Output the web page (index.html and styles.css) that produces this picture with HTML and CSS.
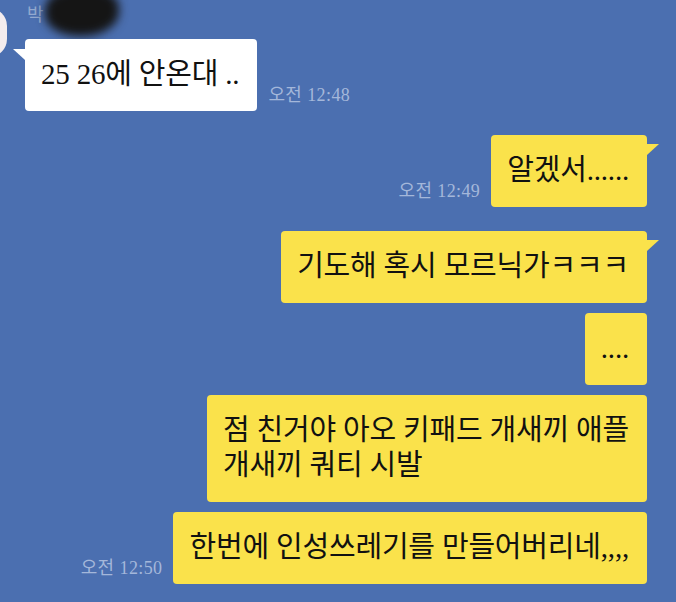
FILE: index.html
```html
<!DOCTYPE html>
<html lang="ko">
<head>
    <meta charset="UTF-8">
    <meta name="viewport" content="width=device-width, initial-scale=1.0">
    <title>채팅</title>
    <link rel="stylesheet" href="styles.css">
</head>
<body>

<div class="chat">
    <div class="row-in">
        <div class="avatar"></div>
        <div class="in-body">
            <div class="name">박<span class="censor"></span></div>
            <div class="line">
                <div class="bubble white tail">25 26에 안온대 ..</div>
                <span class="time">오전 12:48</span>
            </div>
        </div>
    </div>

    <div class="line out group">
        <span class="time">오전 12:49</span>
        <div class="bubble yellow tail">알겠서......</div>
    </div>

    <div class="line out group">
        <div class="bubble yellow tail">기도해 혹시 모르닉가ㅋㅋㅋ</div>
    </div>
    <div class="line out">
        <div class="bubble yellow">....</div>
    </div>
    <div class="line out">
        <div class="bubble yellow">점 친거야 아오 키패드 개새끼 애플<br>개새끼 쿼티 시발</div>
    </div>
    <div class="line out">
        <span class="time">오전 12:50</span>
        <div class="bubble yellow">한번에 인성쓰레기를 만들어버리네,,,,</div>
    </div>
</div>

</body>
</html>
```

FILE: styles.css
```css
body { margin: 0; background: #4b6fb0; font-family: "Liberation Serif", "Noto Sans CJK KR", serif; color: #111; overflow: hidden; }
.chat { width: 676px; height: 602px; padding-right: 29px; box-sizing: border-box; }

/* 받은 메시지 */
.row-in { display: flex; }
.avatar { width: 45px; height: 49px; margin-left: -38px; margin-top: 8px; border-radius: 18px; background: #f3ecee; flex-shrink: 0; }
.in-body { margin-left: 18px; }
.name { position: relative; height: 26px; margin-bottom: 13px; padding-left: 2px; font-family: "Noto Sans CJK KR", sans-serif; font-size: 18px; line-height: 26px; color: #93a9cf; }
.censor { position: absolute; left: 20px; top: -12px; width: 74px; height: 48px; border-radius: 45% 40% 50% 45%; background: #151515; filter: blur(5px); }

.line { display: flex; align-items: flex-end; gap: 11px; }
.out { justify-content: flex-end; margin-top: 10px; }
.out.group { margin-top: 24px; }

.bubble { position: relative; padding: 18px 18px 19px 16px; border-radius: 4px; font-size: 29px; line-height: 35px; letter-spacing: -0.2px; white-space: nowrap; }
.white { background: #fff; }
.yellow { background: #fae24b; }

.white.tail::before { content: ''; position: absolute; left: -12px; top: 10px; width: 12px; height: 11px; background: #fff; clip-path: polygon(0 0, 100% 0, 100% 100%); }
.yellow.tail::after { content: ''; position: absolute; right: -12px; top: 9px; width: 12px; height: 11px; background: #fae24b; clip-path: polygon(0 0, 100% 0, 0 100%); }

.time { padding-bottom: 6px; font-size: 18px; line-height: 20px; letter-spacing: 0.4px; color: #a4b7da; white-space: nowrap; }
```
